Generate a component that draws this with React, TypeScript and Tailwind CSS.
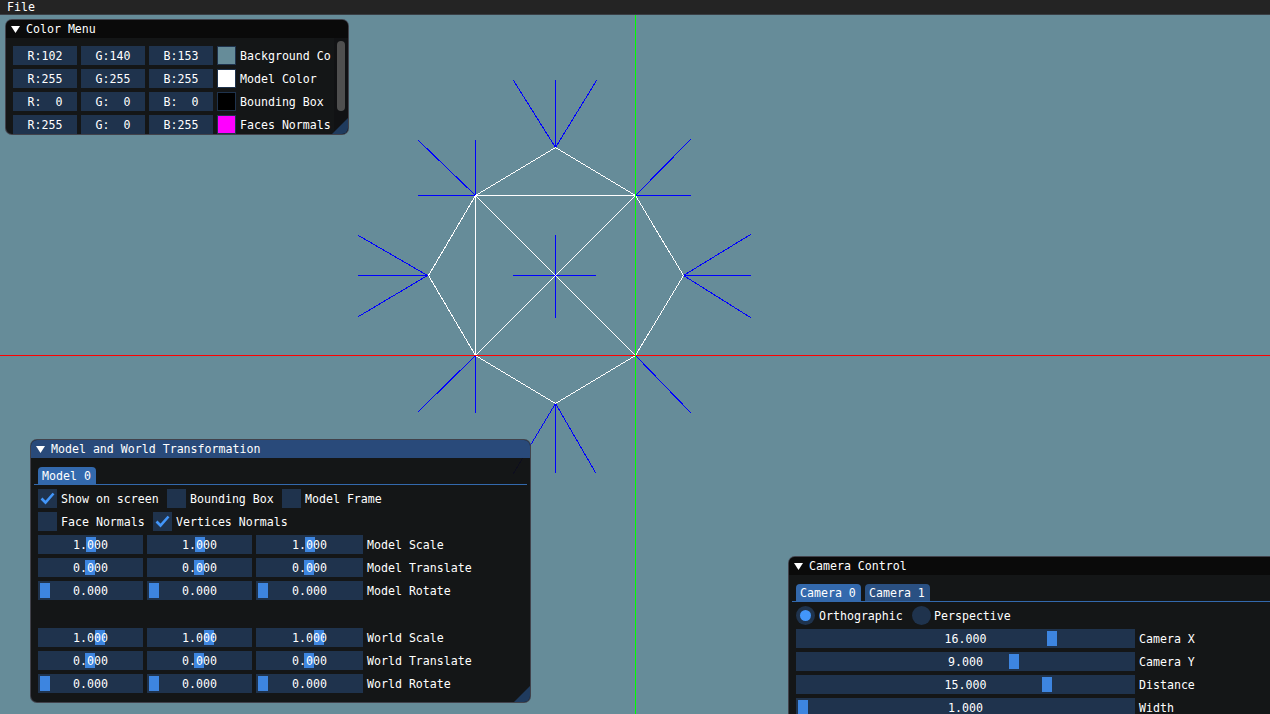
import { ReactNode } from "react";

const BLUE = [
  // top vertex
  [555, 147, 513, 80], [555, 147, 555, 80], [555, 147, 596, 80],
  // upper left
  [475, 195, 418, 140], [475, 195, 475, 140], [475, 195, 418, 195],
  // upper right
  [635, 195, 690, 139], [635, 195, 690, 195],
  // left
  [427, 275, 358, 235], [427, 275, 358, 275], [427, 275, 358, 316],
  // right
  [683, 275, 750, 234], [683, 275, 750, 275], [683, 275, 750, 317],
  // center
  [555, 235, 555, 317], [513, 275, 595, 275],
  // lower left, lower right
  [475, 355, 418, 411], [475, 355, 475, 412], [635, 355, 690, 412],
  // bottom
  [555, 403, 513, 473], [555, 403, 555, 472], [555, 403, 595, 472],
];

const WHITE = [
  [555, 147, 475, 195], [555, 147, 635, 195], [475, 195, 635, 195],
  [475, 195, 428, 275], [428, 275, 475, 355], [475, 195, 475, 355],
  [475, 195, 635, 355], [635, 195, 475, 355], [635, 195, 683, 275],
  [683, 275, 635, 355], [475, 355, 555, 403], [635, 355, 555, 403],
];

function Triangle() {
  return (
    <svg width="9" height="7" viewBox="0 0 9 7" className="flex-none">
      <polygon points="0,0 9,0 4.5,7" fill="#ffffff" />
    </svg>
  );
}

function Grip() {
  return (
    <svg width="16" height="16" viewBox="0 0 16 16" className="absolute right-0 bottom-0">
      <polygon points="16,0 16,16 0,16" fill="#1f3b5e" />
    </svg>
  );
}

function TitleBar({ title, active }: { title: string; active?: boolean }) {
  return (
    <div className={`flex h-[18px] flex-none items-center gap-[6px] pl-[5px] ${active ? "bg-[#294a7a]" : "bg-[#0a0a0a]"}`}>
      <Triangle />
      <span className="pt-[2px]">{title}</span>
    </div>
  );
}

function Slider({ value, grab, width }: { value: string; grab: number; width: string }) {
  return (
    <div className={`relative flex h-[19px] flex-none items-center justify-center bg-[#1f334d] ${width}`}>
      <div className="absolute top-[2px] bottom-[2px] w-[10px] bg-[#3d85e0]" style={{ left: grab }} />
      <span className="relative whitespace-pre pt-[2px]">{value}</span>
    </div>
  );
}

function Check({ on }: { on?: boolean }) {
  return (
    <div className="flex h-[19px] w-[19px] flex-none items-center justify-center bg-[#1f334d]">
      {on && (
        <svg width="15" height="13" viewBox="0 0 15 13">
          <path d="M1.5 6.5 L5.5 10.5 L13.5 1.5" fill="none" stroke="#4296fa" strokeWidth="2.6" />
        </svg>
      )}
    </div>
  );
}

function Radio({ on }: { on?: boolean }) {
  return (
    <div className="flex h-[19px] w-[19px] flex-none items-center justify-center rounded-full bg-[#1f334d]">
      {on && <div className="h-[11px] w-[11px] rounded-full bg-[#4296fa]" />}
    </div>
  );
}

function ColorRow({ r, g, b, swatch, label }: { r: string; g: string; b: string; swatch: string; label: string }) {
  return (
    <div className="flex h-[19px] flex-none items-center gap-1">
      {[r, g, b].map((v) => (
        <div key={v} className="flex h-[19px] w-[64px] flex-none items-center justify-center whitespace-pre bg-[#1f334d] pt-[2px]">
          {v}
        </div>
      ))}
      <div className={`h-[19px] w-[19px] flex-none border border-[#1f334d] ${swatch}`} />
      <span className="whitespace-pre pt-[2px]">{label}</span>
    </div>
  );
}

function TransformRow({ label, grabs }: { label: string; grabs: [string, number][] }) {
  return (
    <div className="flex items-center gap-1">
      <Slider value={grabs[0][0]} grab={grabs[0][1]} width="w-[105px]" />
      <Slider value={grabs[1][0]} grab={grabs[1][1]} width="w-[105px]" />
      <Slider value={grabs[2][0]} grab={grabs[2][1]} width="w-[107px]" />
      <span className="pt-[2px]">{label}</span>
    </div>
  );
}

function CameraRow({ value, grab, label }: { value: string; grab: number; label: string }) {
  return (
    <div className="flex items-center gap-1">
      <Slider value={value} grab={grab} width="w-[339px]" />
      <span className="pt-[2px]">{label}</span>
    </div>
  );
}

function Tab({ children, active, width }: { children: ReactNode; active?: boolean; width: string }) {
  return (
    <div className={`flex h-[17px] items-center rounded-t-[4px] pt-[2px] pl-1 ${width} ${active ? "bg-[#3369ad]" : "bg-[#2a5082]"}`}>
      {children}
    </div>
  );
}

export default function App() {
  return (
    <div className="relative h-[714px] w-full overflow-hidden bg-[#668c99] font-['DejaVu_Sans_Mono',monospace] text-[11.6px] leading-none text-white">
      <svg className="absolute top-0 left-0" width="1270" height="714" shapeRendering="crispEdges">
        {BLUE.map(([x1, y1, x2, y2], i) => (
          <line key={i} x1={x1 + 0.5} y1={y1 + 0.5} x2={x2 + 0.5} y2={y2 + 0.5} stroke="#0000ff" strokeLinecap="square" />
        ))}
        {WHITE.map(([x1, y1, x2, y2], i) => (
          <line key={i} x1={x1 + 0.5} y1={y1 + 0.5} x2={x2 + 0.5} y2={y2 + 0.5} stroke="#ffffff" strokeLinecap="square" />
        ))}
        <line x1="0" y1="355.5" x2="1270" y2="355.5" stroke="#ff0000" />
        <line x1="635.5" y1="14" x2="635.5" y2="714" stroke="#00ff00" />
      </svg>

      {/* main menu */}
      <div className="absolute top-0 left-0 flex h-[15px] w-full items-center border-b border-[#3a3f45] bg-[#242424] pl-[7px]">
        <span className="pt-px">File</span>
      </div>

      {/* Color Menu */}
      <div className="absolute top-[19px] left-[5px] flex h-[116px] w-[344px] flex-col overflow-hidden rounded-[7px] border border-[#6e6e80]/50 bg-[#0f0f0f]/94">
        <TitleBar title="Color Menu" />
        <div className="flex min-h-0 flex-1">
          <div className="flex flex-1 flex-col gap-1 pt-2 pl-[7px]">
            <ColorRow r="R:102" g="G:140" b="B:153" swatch="bg-[#668c99]" label="Background Co" />
            <ColorRow r="R:255" g="G:255" b="B:255" swatch="bg-white" label="Model Color" />
            <ColorRow r="R:  0" g="G:  0" b="B:  0" swatch="bg-black" label="Bounding Box" />
            <ColorRow r="R:255" g="G:  0" b="B:255" swatch="bg-[#ff00ff]" label="Faces Normals" />
          </div>
          <div className="w-[14px] flex-none bg-[#111214] pt-[3px] pl-[3px]">
            <div className="h-[70px] w-[8px] rounded-full bg-[#4f4f4f]" />
          </div>
        </div>
        <Grip />
      </div>

      {/* Model and World Transformation */}
      <div className="absolute top-[439px] left-[30px] flex h-[264px] w-[501px] flex-col overflow-hidden rounded-[7px] border border-[#6e6e80]/50 bg-[#0f0f0f]/94">
        <TitleBar title="Model and World Transformation" active />
        <div className="mx-[3px] mt-[9px] flex flex-none border-b border-[#3369ad] pl-1">
          <Tab active width="w-[58px]">Model 0</Tab>
        </div>
        <div className="flex flex-col gap-1 pt-1 pl-[7px]">
          <div className="flex items-center">
            <Check on />
            <span className="ml-[4px] w-[106px] pt-[2px]">Show on screen</span>
            <Check />
            <span className="ml-[4px] w-[92px] pt-[2px]">Bounding Box</span>
            <Check />
            <span className="ml-[4px] pt-[2px]">Model Frame</span>
          </div>
          <div className="flex items-center">
            <Check />
            <span className="ml-[4px] w-[92px] pt-[2px]">Face Normals</span>
            <Check on />
            <span className="ml-[4px] pt-[2px]">Vertices Normals</span>
          </div>
          <TransformRow label="Model Scale" grabs={[["1.000", 48], ["1.000", 48], ["1.000", 49]]} />
          <TransformRow label="Model Translate" grabs={[["0.000", 47], ["0.000", 47], ["0.000", 48]]} />
          <TransformRow label="Model Rotate" grabs={[["0.000", 2], ["0.000", 2], ["0.000", 2]]} />
          <div className="h-5" />
          <TransformRow label="World Scale" grabs={[["1.000", 57], ["1.000", 57], ["1.000", 58]]} />
          <TransformRow label="World Translate" grabs={[["0.000", 47], ["0.000", 47], ["0.000", 48]]} />
          <TransformRow label="World Rotate" grabs={[["0.000", 2], ["0.000", 2], ["0.000", 2]]} />
        </div>
        <Grip />
      </div>

      {/* Camera Control */}
      <div className="absolute top-[556px] left-[788px] flex h-[200px] w-[520px] flex-col overflow-hidden rounded-[7px] border border-[#6e6e80]/50 bg-[#0f0f0f]/94">
        <TitleBar title="Camera Control" />
        <div className="mt-[9px] ml-[3px] flex flex-none gap-1 border-b border-[#3369ad] pl-1">
          <Tab active width="w-[65px]">Camera 0</Tab>
          <Tab width="w-[65px]">Camera 1</Tab>
        </div>
        <div className="flex flex-col gap-1 pt-1 pl-[7px]">
          <div className="flex items-center">
            <Radio on />
            <span className="ml-[4px] w-[93px] pt-[2px]">Orthographic</span>
            <Radio />
            <span className="ml-[3px] pt-[2px]">Perspective</span>
          </div>
          <CameraRow value="16.000" grab={251} label="Camera X" />
          <CameraRow value="9.000" grab={213} label="Camera Y" />
          <CameraRow value="15.000" grab={246} label="Distance" />
          <CameraRow value="1.000" grab={2} label="Width" />
        </div>
      </div>
    </div>
  );
}
